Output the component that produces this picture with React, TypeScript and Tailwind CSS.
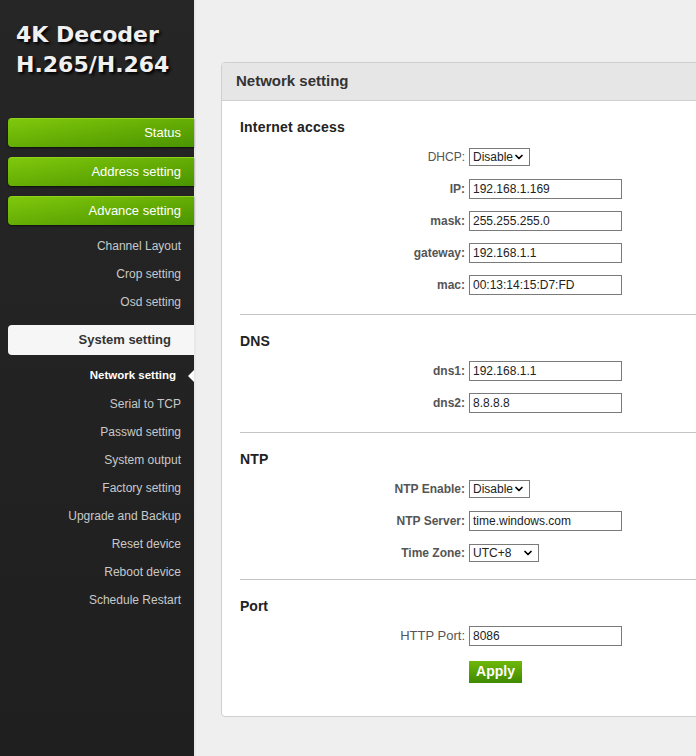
import { ChevronDown } from 'lucide-react';

const greenItems = ['Status', 'Address setting', 'Advance setting'];
const advanceSub = ['Channel Layout', 'Crop setting', 'Osd setting'];
const systemSub = [
    'Network setting',
    'Serial to TCP',
    'Passwd setting',
    'System output',
    'Factory setting',
    'Upgrade and Backup',
    'Reset device',
    'Reboot device',
    'Schedule Restart',
];

const SubItem = ({ label, active }: { label: string; active?: boolean }) => (
    <div className="relative h-[28px] flex items-center justify-end">
        <span
            className={
                active
                    ? 'text-[11.5px] font-bold text-white pr-[18px]'
                    : 'text-[12px] text-[#c9c9c9] pr-[13px]'
            }
        >
            {label}
        </span>
        {active && (
            <span className="absolute right-0 top-1/2 -translate-y-1/2 w-0 h-0 border-y-[6px] border-y-transparent border-r-[6px] border-r-white" />
        )}
    </div>
);

const Sidebar = () => (
    <aside className="w-[196px] shrink-0 h-full bg-gradient-to-b from-[#262626] to-[#1f1f1f] border-r-2 border-[#e8e8e8]">
        <div
            className="pt-[20px] pl-4 text-[22px] leading-[30px] font-bold text-[#f0f0f0] [text-shadow:2px_2px_3px_#000]"
            style={{ fontFamily: '"DejaVu Sans", Verdana, sans-serif' }}
        >
            <div>4K Decoder</div>
            <div>H.265/H.264</div>
        </div>

        <nav className="mt-[38px] pl-2">
            <div className="flex flex-col gap-[10px]">
                {greenItems.map((item) => (
                    <div
                        key={item}
                        className="h-[29px] rounded-l-[4px] bg-gradient-to-br from-[#80c80c] to-[#4a9400] border-t border-[#8fd31c] flex items-center justify-end pr-[13px] text-[13px] text-white shadow-[0_1px_2px_rgba(0,0,0,0.6)]"
                    >
                        {item}
                    </div>
                ))}
            </div>

            <div className="mt-[7px]">
                {advanceSub.map((item) => (
                    <SubItem key={item} label={item} />
                ))}
            </div>

            <div className="mt-[9px] h-[30px] rounded-l-[4px] bg-[#f6f6f6] flex items-center justify-end pr-[23px] text-[13px] font-bold text-[#333]">
                System setting
            </div>

            <div className="mt-[7px]">
                {systemSub.map((item, i) => (
                    <SubItem key={item} label={item} active={i === 0} />
                ))}
            </div>
        </nav>
    </aside>
);

const TextBox = ({ value }: { value: string }) => (
    <div className="w-[153px] h-[20px] border border-[#7a7a7a] bg-white pl-[3px] flex items-center text-[12px] text-[#222]">
        {value}
    </div>
);

const SelectBox = ({ value, width }: { value: string; width: string }) => (
    <div
        className={`${width} h-[18px] border border-[#7a7a7a] bg-white pl-[3px] pr-[4px] flex items-center justify-between text-[12px] text-[#222]`}
    >
        <span>{value}</span>
        <ChevronDown className="w-[12px] h-[12px] text-black" strokeWidth={3.5} />
    </div>
);

const Row = ({ label, bold = true, size = 'text-[12px]', children }: { label: string; bold?: boolean; size?: string; children: React.ReactNode }) => (
    <div className="h-8 flex items-center">
        <div className={`w-[225px] text-right ${size} ${bold ? 'font-bold' : ''} text-[#555]`}>{label}</div>
        <div className="ml-1">{children}</div>
    </div>
);

const Section = ({ title, first, pb = 'pb-[13px]', children }: { title: string; first?: boolean; pb?: string; children: React.ReactNode }) => (
    <section className={`pt-4 ${pb} ${first ? '' : 'border-t border-[#c4c4c4]'}`}>
        <h3 className="h-5 leading-5 text-[14px] font-bold text-[#222] tracking-[0.2px]">{title}</h3>
        <div className="mt-1">{children}</div>
    </section>
);

export default function App() {
    return (
        <div
            className="w-[696px] h-[756px] flex overflow-hidden bg-[#efefef]"
            style={{ fontFamily: '"Liberation Sans", Arial, sans-serif' }}
        >
            <Sidebar />

            <main className="flex-1 pl-[25px] pt-[62px]">
                <div className="w-[600px] rounded-[4px] border border-[#cfcfcf] bg-white overflow-hidden">
                    <div className="h-[38px] bg-[#e6e6e6] border-b border-[#cfcfcf] flex items-center pl-[14px] text-[15px] font-bold text-[#333]">
                        Network setting
                    </div>

                    <div className="pl-[18px] pb-[33px]">
                        <Section title="Internet access" first pb="pb-[13px]">
                            <Row label="DHCP:" bold={false}>
                                <SelectBox value="Disable" width="w-[61px]" />
                            </Row>
                            <Row label="IP:">
                                <TextBox value="192.168.1.169" />
                            </Row>
                            <Row label="mask:">
                                <TextBox value="255.255.255.0" />
                            </Row>
                            <Row label="gateway:">
                                <TextBox value="192.168.1.1" />
                            </Row>
                            <Row label="mac:">
                                <TextBox value="00:13:14:15:D7:FD" />
                            </Row>
                        </Section>

                        <Section title="DNS" pb="pb-[13px]">
                            <Row label="dns1:">
                                <TextBox value="192.168.1.1" />
                            </Row>
                            <Row label="dns2:">
                                <TextBox value="8.8.8.8" />
                            </Row>
                        </Section>

                        <Section title="NTP" pb="pb-[10px]">
                            <Row label="NTP Enable:">
                                <SelectBox value="Disable" width="w-[61px]" />
                            </Row>
                            <Row label="NTP Server:">
                                <TextBox value="time.windows.com" />
                            </Row>
                            <Row label="Time Zone:">
                                <SelectBox value="UTC+8" width="w-[70px]" />
                            </Row>
                        </Section>

                        <section className="pt-4 border-t border-[#c4c4c4]">
                            <h3 className="h-5 leading-5 text-[14px] font-bold text-[#222]">Port</h3>
                            <div className="mt-1">
                                <Row label="HTTP Port:" bold={false} size="text-[13px]">
                                    <TextBox value="8086" />
                                </Row>
                            </div>
                            <div className="mt-[7px] pl-[229px]">
                                <button className="w-[53px] h-[22px] bg-gradient-to-b from-[#6fb80a] to-[#3f8a00] text-white text-[14px] font-bold">
                                    Apply
                                </button>
                            </div>
                        </section>
                    </div>
                </div>
            </main>
        </div>
    );
}
